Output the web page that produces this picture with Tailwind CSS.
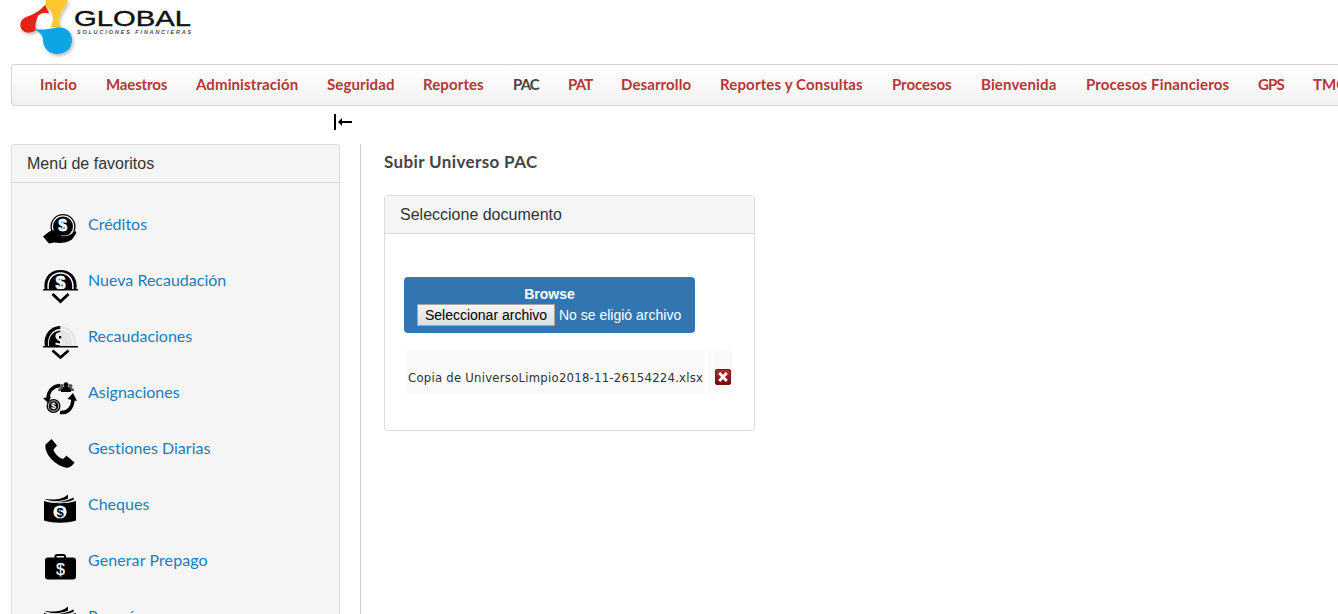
<!DOCTYPE html>
<html lang="es">
<head>
<meta charset="utf-8">
<title>Subir Universo PAC</title>
<script src="https://cdn.jsdelivr.net/npm/@tailwindcss/browser@4"></script>
</head>
<body class="bg-white w-[1338px] h-[614px] overflow-hidden font-['Liberation_Sans',Arial,sans-serif] text-[#333]">
<header class="h-16 pl-[11px]">
  <svg class="block" width="190" height="62" viewBox="11 0 190 62">
    <defs><filter id="sh" x="-20%" y="-20%" width="150%" height="150%"><feDropShadow dx="1.5" dy="2" stdDeviation="1.8" flood-color="#000" flood-opacity=".25"/></filter></defs>
    <g filter="url(#sh)">
      <path d="M46 0H68C67 5 62 9 60 15C58 20 58 24 62 28L50 27C55 20 54 10 45 6Z" fill="#fdc82f"/>
      <path d="M45 5L49 13C44 13 38 17 36 22C35 24 35 27 36 30C32 33 28 33 25 32C20 30 19 24 22 20C26 15 34 17 45 5Z" fill="#e42313"/>
      <path d="M32 28C39 31 47 29 55 28C65 26 72 31 72 40C72 49 65 54 57 54C49 54 43 48 43 40C43 34 39 32 32 28Z" fill="#0aa5e6"/>
    </g>
    <circle cx="44.500" cy="21" r="8" fill="#fff"/>
    <text x="74" y="26" font-family="Liberation Sans" font-size="22.500" textLength="117" lengthAdjust="spacingAndGlyphs" fill="#111" stroke="#111" stroke-width=".4">GLOBAL</text>
    <text x="77" y="33.5" font-family="Liberation Sans" font-size="5.3" font-style="italic" textLength="114" fill="#333" stroke="#333" stroke-width=".15">SOLUCIONES FINANCIERAS</text>
  </svg>
</header>
<nav class="ml-[11px] w-[1327px] h-[42px] rounded-l-[4px] border border-r-0 border-[#d4d4d4] bg-linear-to-b from-white to-[#f2f2f2] flex overflow-hidden pl-[28px] pt-[8px] whitespace-nowrap font-['Lato',sans-serif] font-bold text-[15px] leading-[22px] tracking-[.1px] text-[#b53637] *:shrink-0">
  <a class="w-[66px]">Inicio</a><a class="w-[90px] tracking-[-.15px]">Maestros</a><a class="w-[131px]">Administración</a><a class="w-[96px]">Seguridad</a><a class="w-[90px]">Reportes</a><a class="w-[55px] text-[#444] tracking-[-.9px]">PAC</a><a class="w-[53px] tracking-[-.8px]">PAT</a><a class="w-[99px]">Desarrollo</a><a class="w-[172px] tracking-[.15px]">Reportes y Consultas</a><a class="w-[89px] tracking-[-.05px]">Procesos</a><a class="w-[105px] tracking-[.15px]">Bienvenida</a><a class="w-[172px] tracking-[.15px]">Procesos Financieros</a><a class="w-[55px] tracking-[-.8px]">GPS</a><a>TMC</a>
</nav>
<div class="h-[38px] pl-[334px] pt-[8px]">
  <svg class="block" width="18" height="16" viewBox="0 0 18 16"><path d="M0 0h2v16H0zM4 8l4-4v3h10v2H8v3z" fill="#000"/></svg>
</div>
<main class="flex h-[470px] overflow-hidden">
  <aside class="ml-[11px] w-[329px] h-[470px] shrink-0 overflow-hidden border border-b-0 border-[#dcdcdc] rounded-t-[4px] bg-[#f5f5f5]">
    <h2 class="h-[38px] border-b border-[#dcdcdc] pl-[15px] text-[16px] leading-[37px]"><span>Menú de favoritos</span></h2>
    <ul class="pt-[21px] pl-[31px] font-['Lato',sans-serif] text-[16px] text-[#1c7cbd] [font-variant-ligatures:none] [&>li]:h-14 [&>li]:flex [&>li]:gap-[9px] [&_svg]:mt-[9px] [&_svg]:shrink-0 [&_span]:leading-[40px]">
      <li><svg width="36" height="36" viewBox="0 0 36 36"><circle cx="20" cy="13.500" r="12.500"/><circle cx="20" cy="13.500" r="10.600" fill="none" stroke="#f4f4f4" stroke-width="1.200"/><text x="19.800" y="18" text-anchor="middle" font-family="Liberation Sans" font-weight="bold" font-size="16" fill="#fff" stroke="#fff" stroke-width=".5">$</text><path d="M0 23.500l5-4c4-3 8-2.500 13-1h6c3 0 4 1.500 2 3l-7 1.200c4 1 8-.5 11-3.200c2-2 4-1.500 3 1l-4 6c-5 3.500-12 4-18 3l-5 1z"/><path d="M18 22.500c6 1 10-1 12.500-4" fill="none" stroke="#f4f4f4" stroke-width=".6"/></svg><span>Créditos</span></li>
      <li><svg width="36" height="36" viewBox="0 1 36 36"><path d="M1.800 22C-.5 10 7 2 17.500 2S35.500 10 33.200 22z"/><path d="M5.200 21C4 11 10 5 17.500 5S31 11 29.800 21" fill="none" stroke="#f4f4f4" stroke-width="1.600"/><text x="17.500" y="21" text-anchor="middle" font-family="Liberation Sans" font-weight="bold" font-size="18" fill="#fff" stroke="#fff" stroke-width=".6">$</text><path d="M0 21h35v1.500H0z"/><path d="M9.500 26l8 7.500L25.500 26" fill="none" stroke="#000" stroke-width="2.800"/></svg><span>Nueva Recaudación</span></li>
      <li><svg width="36" height="36" viewBox="0 0 36 36"><path d="M2 21C0 10 7 1 17.500 1V4C9 4 4 12 5 21z"/><path d="M6 21C5 13 9 6 17.500 5.500v3c-6 2-5 5 0 8V21z"/><path d="M17.500 1C27 1 34 9 33 21H17.500z" fill="#e5e5e5"/><path d="M17.500 4.500C25 4 31 12 30 21" fill="none" stroke="#f8f8f8" stroke-width="1.200"/><path d="M17.500 8c-6 1-5 5 0 7.500c2 1 2 3-1 4l-4-1" fill="none" stroke="#f4f4f4" stroke-width="2"/><path d="M16 11h2.200v2.500H16z"/><path d="M0 21h35v1.500H0z"/><path d="M9.500 25.500l8 7L25.500 25.500" fill="none" stroke="#000" stroke-width="2.800"/></svg><span>Recaudaciones</span></li>
      <li><svg width="36" height="36" viewBox="0 -1 36 36"><path d="M5 17C5 9 10 4 17 3.500" fill="none" stroke="#000" stroke-width="3.500"/><path d="M0 16l8-1-3 6z"/><path d="M17 30.500c8 1 13-5 13-14" fill="none" stroke="#000" stroke-width="3.500"/><path d="M24.500 17l5.500-6 4 8z"/><path d="M15 9c0-3 3-4 4-4h8c1 0 4 1 4 4z" fill="#555"/><circle cx="18.500" cy="4" r="2" fill="#555"/><circle cx="27.500" cy="4" r="2" fill="#555"/><circle cx="23" cy="2.800" r="2.500"/><path d="M18 10c0-4 2-5 5-5s5 1 5 5z"/><circle cx="10.500" cy="24" r="7"/><circle cx="10.500" cy="24" r="5.200" fill="none" stroke="#f4f4f4" stroke-width=".8"/><text x="10.500" y="27.300" text-anchor="middle" font-family="Liberation Sans" font-weight="bold" font-size="9" fill="#fff">$</text></svg><span>Asignaciones</span></li>
      <li><svg width="36" height="36" viewBox="0 0 36 36"><path d="M2.500 7.500L8.500 2l5.500 6.500-3.500 4c1 4 5 8 9.500 9.500l3.500-3.300L31.500 25.500c-2 3-5 6-9 5C13 28.500 1 17.500 2.500 7.500z"/></svg><span>Gestiones Diarias</span></li>
      <li><svg width="36" height="36" viewBox="0 0 36 36"><path d="M1 8c9 3 23 3 32 0v19.500c-9 3-23 3-32 0z"/><path d="M1 6c9 1 18 1 24-4.500v4C18 9 9 9 1 6z"/><path d="M1 7c10 3 20 2 30-3v3C23 10.500 12 10.500 1 7z" stroke="#f4f4f4" stroke-width=".7"/><circle cx="17" cy="19" r="6.600" fill="#fff"/><text x="17" y="23.500" text-anchor="middle" font-family="Liberation Sans" font-weight="bold" font-size="13">$</text></svg><span>Cheques</span></li>
      <li><svg width="36" height="36" viewBox="0 -1 36 36"><path d="M12.500 9V6.500q0-1.500 1.500-1.500h6.500q1.500 0 1.500 1.500V9" fill="none" stroke="#000" stroke-width="2"/><rect x="2" y="7.500" width="31" height="22" rx="3"/><text x="17.500" y="24.500" text-anchor="middle" font-family="Liberation Sans" font-size="16" fill="#fff" stroke="#fff" stroke-width=".2">$</text></svg><span class="tracking-[.1px]">Generar Prepago</span></li>
      <li><svg width="36" height="36" viewBox="0 0 36 36"><path d="M1 8c9 3 23 3 32 0v19.500c-9 3-23 3-32 0z"/><path d="M1 6c9 1 18 1 24-4.500v4C18 9 9 9 1 6z"/><path d="M1 7c10 3 20 2 30-3v3C23 10.500 12 10.500 1 7z" stroke="#f4f4f4" stroke-width=".7"/></svg><span>Pagaré</span></li>
    </ul>
  </aside>
  <section class="ml-[20px] border-l border-[#ccc] pl-[23px] h-full">
    <h1 class="h-[51px] pt-[5px] font-['Lato',sans-serif] font-bold text-[17px] leading-[26px] tracking-[.37px] text-[#444]"><span>Subir Universo PAC</span></h1>
    <div class="w-[371px] h-[236px] border border-[#dcdcdc] rounded-[4px]">
      <h2 class="h-[38px] border-b border-[#dcdcdc] bg-[#f5f5f5] rounded-t-[3px] pl-[15px] text-[16px] leading-[37px]"><span>Seleccione documento</span></h2>
      <div class="mt-[43px] ml-[19px] w-[291px] h-[56px] rounded-[4px] bg-[#3276b1] pt-[7px] px-[13px] text-white text-[14px] leading-5">
        <b class="block text-center">Browse</b>
        <div class="flex items-center gap-1 whitespace-nowrap">
          <button class="w-[138px] h-[22px] shrink-0 border border-[#a6a6a6] bg-linear-to-b from-[#f4f4f4] to-[#dedede] text-black text-[14px] leading-5">Seleccionar archivo</button><span>No se eligió archivo</span>
        </div>
      </div>
      <div class="mt-[17px] ml-[21px] flex h-[44px] *:bg-[#f9f9f9]">
        <div class="w-[299px] pl-[2px] pt-[18px] whitespace-nowrap font-['DejaVu_Sans_Condensed','DejaVu_Sans',sans-serif] font-stretch-condensed text-[13px] leading-5 tracking-[.23px]"><span>Copia de UniversoLimpio2018-11-26154224.xlsx</span></div>
        <div class="ml-[3px] w-[3px]"></div>
        <div class="ml-[2px] w-[20px] pt-[19px] pl-[2px]"><svg class="block" width="16" height="16" viewBox="0 0 17 16" preserveAspectRatio="none"><defs><linearGradient id="r" x2="0" y2="1"><stop stop-color="#b03030"/><stop offset="1" stop-color="#780808"/></linearGradient></defs><rect x=".5" y=".5" width="16" height="15" rx="1.500" fill="url(#r)" stroke="#7a1010"/><path d="M4.500 4l8 8M12.500 4l-8 8" stroke="#fff" stroke-width="3"/></svg></div>
      </div>
    </div>
  </section>
</main>
</body>
</html>
